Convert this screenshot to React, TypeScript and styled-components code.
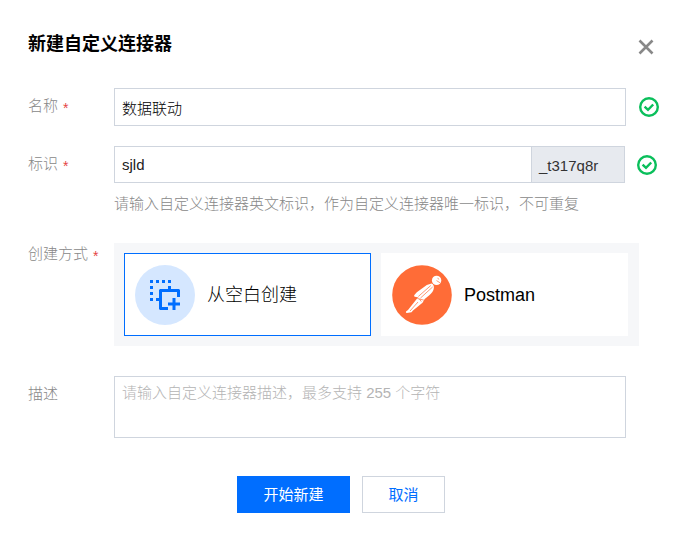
import React, { useState } from "react";
import styled, { createGlobalStyle } from "styled-components";

const GlobalStyle = createGlobalStyle`
  *, *::before, *::after { box-sizing: border-box; }
  body {
    margin: 0;
    background: #fff;
    color: #000;
    font-family: "Liberation Sans", "Noto Sans CJK SC", sans-serif;
    font-size: 15px;
    line-height: 22px;
  }
  button, input, textarea { font: inherit; color: inherit; }
`;

const Dialog = styled.main`
  padding: 28px 21px 28px 28px;
`;

const Header = styled.header`
  display: flex;
  align-items: flex-start;
  justify-content: space-between;
  height: 60px;
`;

const Title = styled.h1`
  margin: 0;
  color: #000;
  font-size: 18px;
  font-weight: 700;
  line-height: 32px;
`;

const CloseButton = styled.button`
  display: flex;
  margin: 9px 3px 0 0;
  padding: 2px;
  border: 0;
  background: none;
  color: #888;
  cursor: pointer;
`;

const Row = styled.div<{ $gap: number; $end?: number }>`
  display: flex;
  align-items: flex-start;
  margin-bottom: ${(p) => p.$gap}px;
  padding-right: ${(p) => p.$end ?? 0}px;
`;

const Label = styled.label<{ $tall?: boolean }>`
  display: flex;
  gap: 5px;
  flex: none;
  width: 86px;
  padding-top: ${(p) => (p.$tall ? 7 : 0)}px;
  color: #888;
  font-weight: 300;
  white-space: nowrap;
`;

const Required = styled.span`
  padding-top: 2px;
  color: #e54545;
  font-size: 14px;
`;

const Control = styled.div`
  flex: 1;
  min-width: 0;
`;

const TextInput = styled.input`
  display: block;
  width: 100%;
  height: 38px;
  padding: 0 7px;
  border: 1px solid #cfd5de;
  border-radius: 0;
  background: #fff;
  font-weight: 300;
  outline: none;
`;

const InputGroup = styled.div`
  display: flex;
  height: 37px;
  border: 1px solid #cfd5de;

  ${TextInput} {
    flex: 1;
    min-width: 0;
    height: 100%;
    border: 0;
    color: #222;
  }
`;

const Suffix = styled.span`
  display: flex;
  align-items: center;
  width: 93px;
  padding: 2px 7px 0;
  border-left: 1px solid #cfd5de;
  background: #e7eaef;
  color: #333;
`;

const Status = styled.span<{ $gap: number }>`
  display: flex;
  align-items: center;
  height: 38px;
  margin-left: ${(p) => p.$gap}px;
`;

const Hint = styled.p`
  margin: 10px 0 0;
  color: #888;
  font-weight: 300;
`;

const Options = styled.div`
  display: grid;
  grid-template-columns: 1fr 1fr;
  gap: 10px;
  padding: 10px 11px 10px 10px;
  background: #f6f7f9;
`;

const Card = styled.label<{ $selected: boolean }>`
  display: flex;
  align-items: center;
  gap: 12px;
  height: 83px;
  padding: 0 10px;
  border: 1px solid ${(p) => (p.$selected ? "#006eff" : "#fff")};
  background: #fff;
  color: #000;
  font-size: 18px;
  font-weight: 300;
  cursor: pointer;
`;

const HiddenRadio = styled.input`
  appearance: none;
  position: absolute;
  width: 0;
  height: 0;
  margin: 0;
`;

const TextArea = styled.textarea`
  display: block;
  width: 100%;
  height: 62px;
  padding: 5px 7px;
  border: 1px solid #cfd5de;
  border-radius: 0;
  outline: none;
  resize: none;

  &::placeholder {
    color: #b4b4b4;
    font-weight: 300;
    opacity: 1;
  }
`;

const Footer = styled.footer`
  display: flex;
  justify-content: center;
  gap: 12px;
  padding-top: 8px;
  padding-right: 5px;
`;

const Button = styled.button<{ $primary?: boolean }>`
  min-width: ${(p) => (p.$primary ? 113 : 83)}px;
  height: 37px;
  padding: 0 20px;
  border: 1px solid ${(p) => (p.$primary ? "#006eff" : "#cfd5de")};
  background: ${(p) => (p.$primary ? "#006eff" : "#fff")};
  color: ${(p) => (p.$primary ? "#fff" : "#006eff")};
  cursor: pointer;
`;

const CheckIcon = () => (
  <svg width="20" height="20" viewBox="0 0 20 20" fill="none" stroke="#0abf5b" role="img" aria-label="通过">
    <circle cx="10" cy="10" r="8.8" strokeWidth="2.4" />
    <path d="M5.6 9.6 9 12.9l5.2-5.4" strokeWidth="2.4" />
  </svg>
);

const CloseIcon = () => (
  <svg width="16" height="16" viewBox="0 0 16 16" fill="none" stroke="currentColor" strokeWidth="2.6" aria-hidden="true">
    <path d="M1.5 1.5l13 13M14.5 1.5l-13 13" />
  </svg>
);

const BlankIcon = () => (
  <svg width="60" height="60" viewBox="5 5 60 60" aria-hidden="true">
    <circle cx="35" cy="35" r="30" fill="#d5e7ff" />
    <path
      d="M20 20h3v3h-3zM26 20h3v3h-3zM32 20h3v3h-3zM38 20h3v3h-3zM20 26h3v3h-3zM20 32h3v3h-3zM20 38h3v3h-3zM38 26h3v3h-3zM26 38h3v3h-3z"
      fill="#006eff"
      shapeRendering="crispEdges"
    />
    <path d="M30 29h19l1 1v7h-3v-5H32v15h6v3h-8l-1-1V30z" fill="#006eff" />
    <path d="M44 38v12M38 44h12" stroke="#006eff" strokeWidth="3" />
  </svg>
);

const PostmanIcon = () => (
  <svg width="60" height="60" viewBox="0 0 60 60" aria-hidden="true">
    <circle cx="30" cy="30" r="29.8" fill="#ff6c37" />
    <g fill="#fff">
      <circle cx="44.6" cy="15.4" r="4.7" />
      <path d="M39.5 18.6c1.6.6 2.6 2 2.4 4.2-.2 3.200-2.200 5.400-4.900 7.600l-4.300 3.700-2.200 3.600-9.500 7.800-1.500 1.700-4.700.7c-1-.1-1.100-1-.5-1.600l1.700-1.300 8.900-11.300 1.600-1.300-3.600-.6c-.9-.3-1-1.300-.3-2l2.200-2.500 10-7.300z" />
    </g>
    <g fill="none" stroke="#ff6c37" strokeWidth="0.7">
      <path d="M38.800 20.500 26.300 31.500M40.600 22 28.500 33M25.500 33.500l6.300 1.600M27.500 34l1.800 2.600M26 37l-8 9" />
      <path d="M44.500 15.600l3.600 2.200M45.500 13.200l1.600 1.100" />
    </g>
  </svg>
);

export default function App() {
  const [name, setName] = useState("数据联动");
  const [ident, setIdent] = useState("sjld");
  const [mode, setMode] = useState("blank");
  const [description, setDescription] = useState("");

  return (
    <>
      <GlobalStyle />
      <Dialog>
        <Header>
          <Title>新建自定义连接器</Title>
          <CloseButton type="button" aria-label="关闭">
            <CloseIcon />
          </CloseButton>
        </Header>

        <Row $gap={20}>
          <Label htmlFor="name" $tall>
            名称<Required>*</Required>
          </Label>
          <Control>
            <TextInput id="name" value={name} onChange={(e) => setName(e.target.value)} />
          </Control>
          <Status $gap={13}>
            <CheckIcon />
          </Status>
        </Row>

        <Row $gap={28} $end={2}>
          <Label htmlFor="ident" $tall>
            标识<Required>*</Required>
          </Label>
          <Control>
            <InputGroup>
              <TextInput id="ident" value={ident} onChange={(e) => setIdent(e.target.value)} />
              <Suffix>_t317q8r</Suffix>
            </InputGroup>
            <Hint>请输入自定义连接器英文标识，作为自定义连接器唯一标识，不可重复</Hint>
          </Control>
          <Status $gap={12}>
            <CheckIcon />
          </Status>
        </Row>

        <Row $gap={30} $end={20}>
          <Label as="span" id="mode-label">
            创建方式<Required>*</Required>
          </Label>
          <Control>
            <Options role="radiogroup" aria-labelledby="mode-label">
              <Card $selected={mode === "blank"}>
                <HiddenRadio type="radio" name="mode" checked={mode === "blank"} onChange={() => setMode("blank")} />
                <BlankIcon />
                从空白创建
              </Card>
              <Card $selected={mode === "postman"}>
                <HiddenRadio type="radio" name="mode" checked={mode === "postman"} onChange={() => setMode("postman")} />
                <PostmanIcon />
                Postman
              </Card>
            </Options>
          </Control>
        </Row>

        <Row $gap={30} $end={33}>
          <Label htmlFor="description" $tall>
            描述
          </Label>
          <Control>
            <TextArea
              id="description"
              placeholder="请输入自定义连接器描述，最多支持 255 个字符"
              value={description}
              onChange={(e) => setDescription(e.target.value)}
            />
          </Control>
        </Row>

        <Footer>
          <Button type="button" $primary>
            开始新建
          </Button>
          <Button type="button">取消</Button>
        </Footer>
      </Dialog>
    </>
  );
}
